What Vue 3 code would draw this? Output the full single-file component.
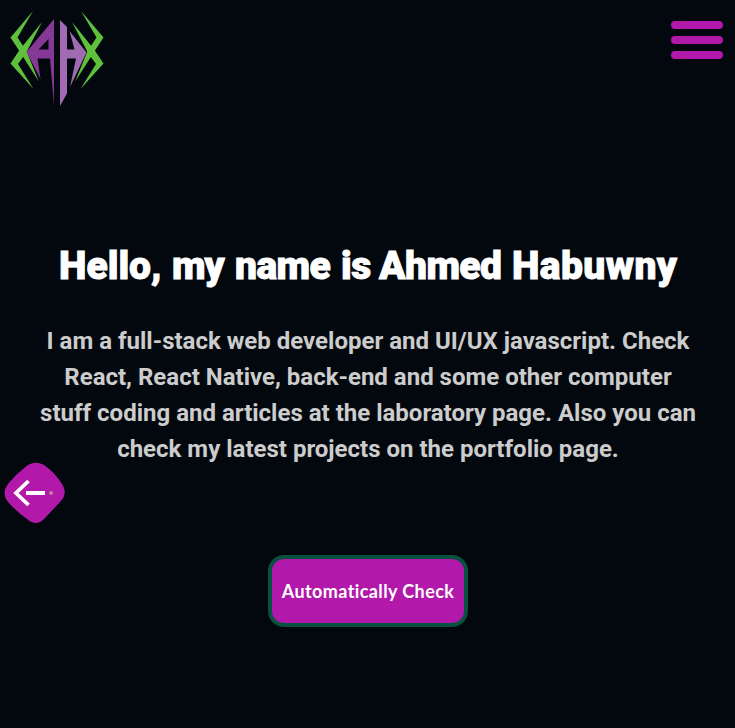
<script setup>
const words = [
  { text: 'Hello,', spacing: 0, width: 113 },
  { text: 'my', spacing: -1.2, width: 63 },
  { text: 'name', spacing: -0.6, width: 106 },
  { text: 'is', spacing: -0.4, width: 38 },
  { text: 'Ahmed', spacing: -0.6, width: 133 },
  { text: 'Habuwny', spacing: 0.4, width: 168 },
]
const lines = [
  'I am a full-stack web developer and UI/UX javascript. Check',
  'React, React Native, back-end and some other computer',
  'stuff coding and articles at the laboratory page. Also you can',
  'check my latest projects on the portfolio page.',
]
</script>

<template>
  <div class="page">
    <header class="top">
      <svg class="logo" width="110" height="110" viewBox="0 0 110 110" aria-label="AH">
        <g v-for="m in ['', 'translate(114 0) scale(-1 1)']" :key="m" :transform="m" fill="#5fc13b">
          <path d="M33 11 L10.500 37.500 L20 52 L38.800 81.500 L26.500 51 L17.500 37.500 Z" />
          <path d="M42 22 L19.500 50 L10.500 63.500 L33.500 89 L18 64 L26 53 Z" />
        </g>
        <path fill="#863896" fill-rule="evenodd" d="M54 19 L26.500 52 L40.500 79 L37.500 58.500 H50 L54 105 Z M48.500 39 V49.500 H38.500 Z" />
        <path fill="#a26ab2" d="M60 20 L67 27 V49.500 H74.500 L69.500 31 L86.500 52.500 L70 87 L76 58.500 H67 V93.500 L60 106 Z" />
      </svg>
      <div class="menu"><i></i><i></i><i></i></div>
    </header>
    <main class="hero">
      <h1>
        <span
          v-for="w in words"
          :key="w.text"
          :style="{ width: w.width + 'px', letterSpacing: w.spacing + 'px' }"
        >{{ w.text }}</span>
      </h1>
      <p><span v-for="l in lines" :key="l">{{ l }}</span></p>
      <button>Automatically Check</button>
    </main>
    <svg class="back" width="62" height="62" viewBox="0 0 62 62">
      <path fill="#b218aa" d="M22 4.500 Q32 -3 42 4.500 Q51 11 58 22 Q64 31 57 39 L40 57 Q32 65 23 57 Q13 50 4 40 Q-3 31 4 22 Q12 12 22 4.500 Z" />
      <path d="M24.500 19 L12 31 L24.500 43" fill="none" stroke="#fff" stroke-width="3.800" />
      <path d="M22 31 H41" stroke="#fff" stroke-width="4" />
      <circle cx="47" cy="31" r="2" fill="#b88a98" />
    </svg>
  </div>
</template>

<style>
body {
  background: #02080e;
}
</style>

<style scoped>
.page {
  position: relative;
  height: 728px;
  overflow: hidden;
  background: #02080e;
}
.top {
  display: flex;
  justify-content: space-between;
  height: 110px;
}
.logo {
  display: block;
}
.menu {
  display: flex;
  flex-direction: column;
  gap: 7px;
  padding: 21px 12px 0 0;
}
.menu i {
  width: 52px;
  height: 8px;
  border-radius: 4px;
  background: #b218aa;
}
.hero {
  display: flex;
  flex-direction: column;
  align-items: center;
  padding-top: 126px;
}
h1 {
  display: flex;
  margin: 0 0 0 4px;
  font: 900 39px/60px Roboto, sans-serif;
  color: #fff;
  white-space: nowrap;
  -webkit-text-stroke: 0.9px #fff;
}
p {
  display: flex;
  flex-direction: column;
  margin: 27px 0 0 1px;
  text-align: center;
  font: 700 24px/36px Roboto, sans-serif;
  color: #ccc;
  white-space: nowrap;
}
button {
  box-sizing: border-box;
  width: 200px;
  height: 72px;
  margin: 88px 0 0 1px;
  padding: 0;
  border: 4px solid #07513f;
  border-radius: 16px;
  background: #b218aa;
  color: #fff;
  font: 700 18px/24px Lato, sans-serif;
  letter-spacing: 0.400px;
  white-space: nowrap;
}
.back {
  position: absolute;
  left: 4px;
  top: 462px;
}
</style>
